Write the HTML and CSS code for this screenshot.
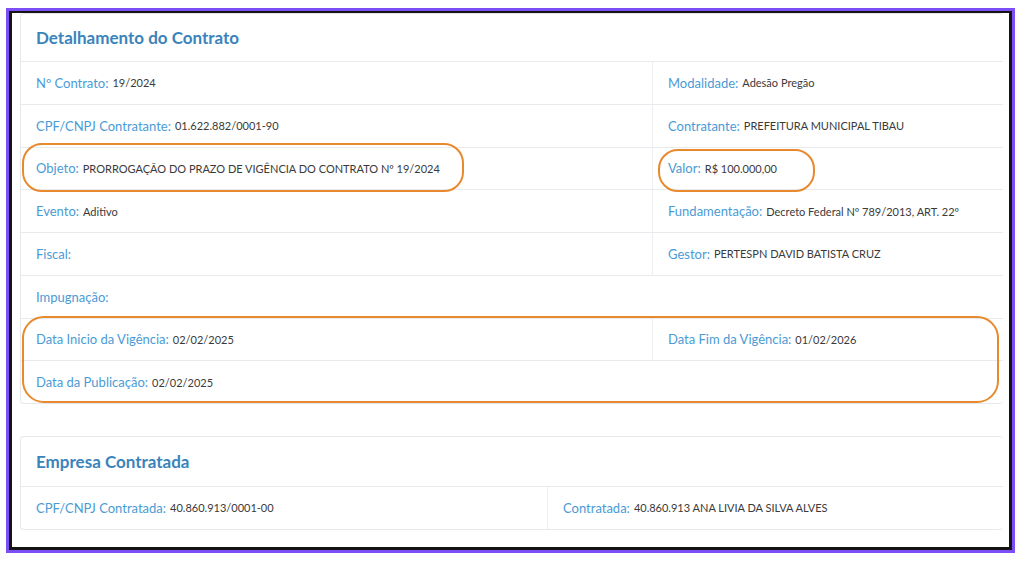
FILE: index.html
```html
<!DOCTYPE html>
<html>

<head>
    <title>Contrato</title>
    <link rel="stylesheet" href="styles.css">
</head>

<body>
    <div class="frame">
        <div class="inner">

            <div class="card">
                <div class="card-header">Detalhamento do Contrato</div>

                <div class="row">
                    <div class="cell left"><span class="lbl">Nº Contrato:</span> <span class="val">19/2024</span></div>
                    <div class="cell"><span class="lbl">Modalidade:</span> <span class="val">Adesão Pregão</span></div>
                </div>
                <div class="row">
                    <div class="cell left"><span class="lbl">CPF/CNPJ Contratante:</span> <span class="val">01.622.882/0001-90</span></div>
                    <div class="cell"><span class="lbl">Contratante:</span> <span class="val">PREFEITURA MUNICIPAL TIBAU</span></div>
                </div>
                <div class="row">
                    <div class="cell left"><span class="lbl">Objeto:</span> <span class="val">PRORROGAÇÃO DO PRAZO DE VIGÊNCIA DO CONTRATO Nº 19/2024</span></div>
                    <div class="cell"><span class="lbl">Valor:</span> <span class="val">R$ 100.000,00</span></div>
                </div>
                <div class="row">
                    <div class="cell left"><span class="lbl">Evento:</span> <span class="val">Aditivo</span></div>
                    <div class="cell"><span class="lbl">Fundamentação:</span> <span class="val">Decreto Federal Nº 789/2013, ART. 22º</span></div>
                </div>
                <div class="row">
                    <div class="cell left"><span class="lbl">Fiscal:</span></div>
                    <div class="cell"><span class="lbl">Gestor:</span> <span class="val">PERTESPN DAVID BATISTA CRUZ</span></div>
                </div>
                <div class="row">
                    <div class="cell"><span class="lbl">Impugnação:</span></div>
                </div>
                <div class="row">
                    <div class="cell left"><span class="lbl">Data Inicio da Vigência:</span> <span class="val">02/02/2025</span></div>
                    <div class="cell"><span class="lbl">Data Fim da Vigência:</span> <span class="val">01/02/2026</span></div>
                </div>
                <div class="row">
                    <div class="cell"><span class="lbl">Data da Publicação:</span> <span class="val">02/02/2025</span></div>
                </div>

                <!-- marcações -->
                <div class="mark mark-objeto"></div>
                <div class="mark mark-valor"></div>
                <div class="mark mark-datas"></div>
            </div>

            <div class="card card2">
                <div class="card-header">Empresa Contratada</div>
                <div class="row">
                    <div class="cell left2"><span class="lbl">CPF/CNPJ Contratada:</span> <span class="val">40.860.913/0001-00</span></div>
                    <div class="cell"><span class="lbl">Contratada:</span> <span class="val">40.860.913 ANA LIVIA DA SILVA ALVES</span></div>
                </div>
            </div>

        </div>
    </div>
</body>

</html>
```

FILE: styles.css
```css
body {
    margin: 0;
    background-color: white;
    font-family: "Lato", "Noto Sans", sans-serif;
}

.frame {
    margin: 8px 9px 10px 6px;
    border: 3px solid #7c4ef6;
}

.inner {
    border: 3px solid #141414;
    border-top-width: 2px;
    padding: 0px 6px 17px 8px;
    background-color: white;
}

.card {
    position: relative;
    border: 1px solid #e6e8ec;
    border-right: none;
    border-radius: 4px;
}

.card2 {
    margin-top: 32px;
}

.card-header {
    height: 47px;
    box-sizing: border-box;
    padding: 0px 15px;
    display: flex;
    align-items: center;
    font-size: 17px;
    font-weight: bold;
    color: #3a83bb;
}

.card2 .card-header {
    height: 49px;
}

.row {
    display: flex;
    height: 42.75px;
    box-sizing: border-box;
    border-top: 1px solid #e8eaee;
}

.cell {
    display: flex;
    align-items: center;
    padding: 0px 15px;
    flex: 1;
    white-space: nowrap;
}

.left {
    flex: 0 0 632px;
    box-sizing: border-box;
    border-right: 1px solid #eceef1;
}

.left2 {
    flex: 0 0 527px;
    box-sizing: border-box;
    border-right: 1px solid #eceef1;
}

.lbl {
    font-size: 13px;
    color: #4a9bd5;
    margin-right: 4px;
}

.val {
    font-size: 11px;
    color: #3a3a3a;
}

.mark {
    position: absolute;
    border: 2.5px solid #e8892e;
    box-sizing: border-box;
}

.mark-objeto {
    left: 1px;
    top: 129px;
    width: 442px;
    height: 49px;
    border-radius: 20px;
}

.mark-valor {
    left: 637px;
    top: 135px;
    width: 157px;
    height: 43px;
    border-radius: 20px;
}

.mark-datas {
    left: 1px;
    top: 302px;
    width: 977px;
    height: 87px;
    border-radius: 22px;
}
```
